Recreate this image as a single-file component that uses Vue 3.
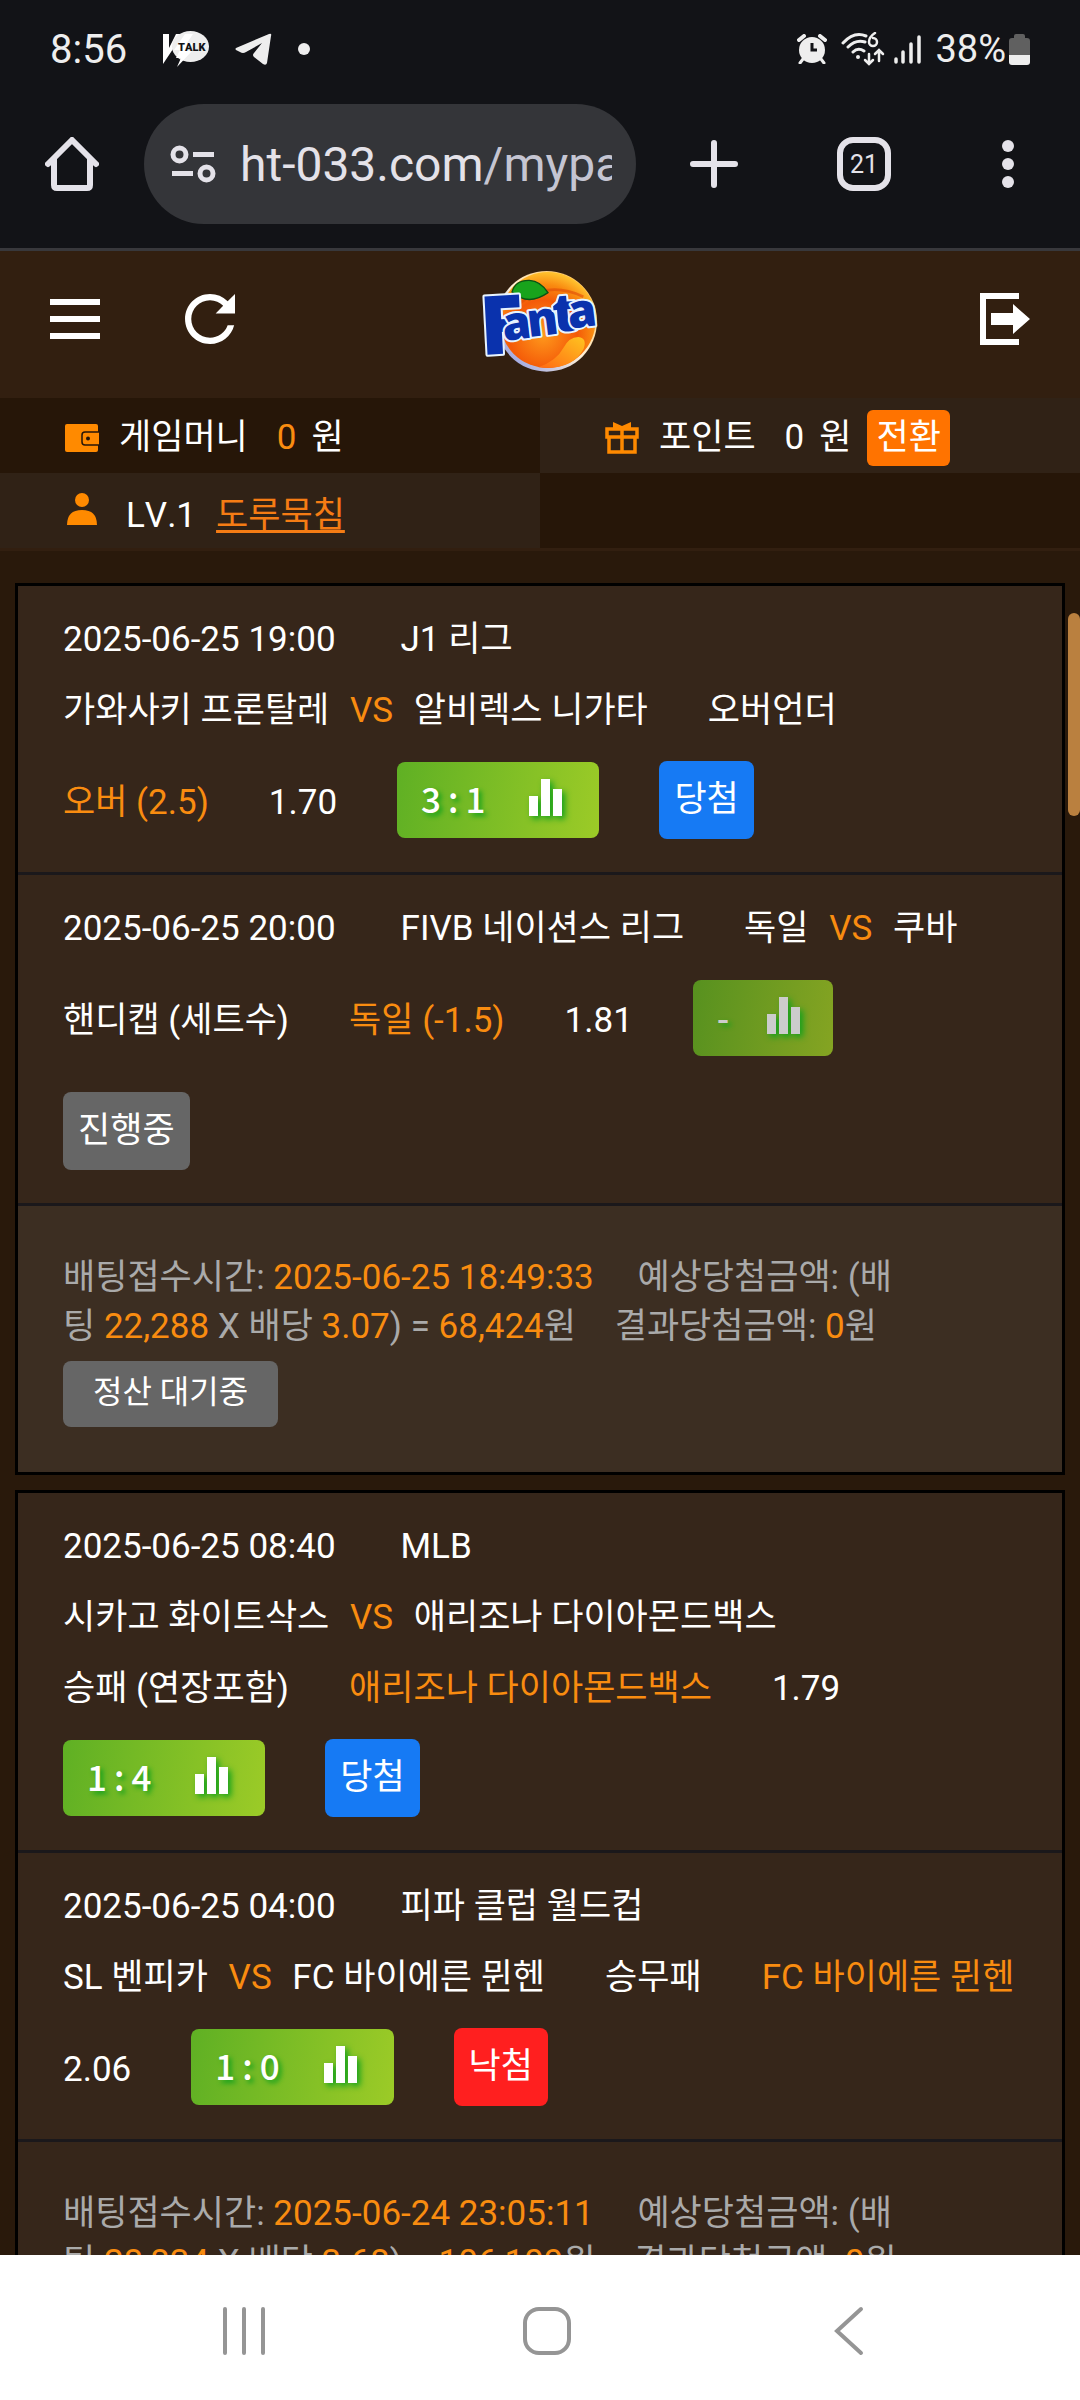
<template>
  <div class="phone">
    <header class="status-bar">
      <span class="clock">8:56</span>
      <svg class="ico-talk" viewBox="0 0 46 36">
        <path d="M0 3h6v14l7-14h8L10 18 0 33z" fill="#fff" />
        <ellipse cx="27.500" cy="15.500" rx="18.500" ry="15.500" fill="#eee" />
        <path d="M22 3h8l-6 9h6l-5 8h4L14 36l4-9h-5l4-8h-6z" fill="#fff" />
        <text x="15" y="20">TALK</text>
      </svg>
      <svg class="ico-telegram" viewBox="0 0 37 32">
        <path d="M1 15 34 1q3-1 2 2l-4 27q-1 3-4 1l-9-7q-2-2 0-4l8-10L11 19q-3 2-6 0l-4-2q-1-1 0-2z" fill="#eee" />
      </svg>
      <i class="more-dot"></i>
      <div class="status-right">
        <svg class="ico-alarm" viewBox="0 0 30 30">
          <circle cx="15" cy="16" r="13" fill="#eee" />
          <path d="M2 6l5-4M28 6l-5-4" stroke="#eee" stroke-width="4" stroke-linecap="round" />
          <path d="M6 25l-3 4M24 25l3 4" stroke="#eee" stroke-width="3" stroke-linecap="round" />
          <path d="M15 9v7h5" stroke="#121317" stroke-width="3" fill="none" />
        </svg>
        <svg class="ico-wifi" viewBox="0 0 44 34">
          <g fill="none" stroke="#eee" stroke-width="3" stroke-linecap="round">
            <path d="M2 11Q13-1 25 4M7 15q8-8 17-5M12 20q5-5 11-1" />
            <path d="M28 22v9M24 28l4 4 4-4M38 29v-9M34 22l4-4 4 4" stroke-width="2.500" />
            <path d="M34 1q-6 4-6 9a4 4 0 1 0 4-4" stroke-width="2.500" />
          </g>
          <circle cx="17" cy="25" r="2" fill="#eee" />
        </svg>
        <svg class="ico-signal" viewBox="0 0 28 30">
          <path d="M2 25v3M9 18v10M17 10v18M25 3v25" stroke="#eee" stroke-width="3.500" stroke-linecap="round" />
        </svg>
        <span class="percent">38%</span>
        <svg class="ico-battery" viewBox="0 0 21 31">
          <path d="M5 2q0-2 2-2h7q2 0 2 2v2h2q3 0 3 3v14H0V7q0-3 3-3h2z" fill="#606060" />
          <path d="M0 21h21v7q0 3-3 3H3q-3 0-3-3z" fill="#eee" />
        </svg>
      </div>
    </header>

    <div class="toolbar">
      <button class="tool home" aria-label="홈">
        <svg viewBox="0 0 54 54">
          <path d="M3 27 27 3l24 24M9 22v26q0 3 3 3h30q3 0 3-3V22" fill="none" stroke="#e4e2e9" stroke-width="6" stroke-linecap="round" stroke-linejoin="round" />
        </svg>
      </button>
      <a class="url" href="#">
        <svg class="ico-tune" viewBox="0 0 46 38">
          <g fill="none" stroke="#e4e2e9" stroke-width="5">
            <circle cx="9.500" cy="9.500" r="6.500" />
            <circle cx="36.500" cy="28.500" r="6.500" />
            <path d="M23 9.500h21M2 28.500h21" />
          </g>
        </svg>
        <span class="address">ht-033.com<span class="path">/mypa</span></span>
      </a>
      <button class="tool plus" aria-label="새 탭">
        <svg viewBox="0 0 54 54">
          <path d="M27 6v42M6 27h42" stroke="#e4e2e9" stroke-width="6" stroke-linecap="round" />
        </svg>
      </button>
      <button class="tool tabs">21</button>
      <button class="tool dots" aria-label="메뉴">
        <svg viewBox="0 0 54 54">
          <g fill="#e4e2e9">
            <circle cx="27" cy="9" r="6" />
            <circle cx="27" cy="27" r="6" />
            <circle cx="27" cy="45" r="6" />
          </g>
        </svg>
      </button>
    </div>

    <main class="page">
      <div class="top">
        <div class="top-left">
          <button class="icon-btn" aria-label="메뉴 열기">
            <svg viewBox="0 0 50 52">
              <path d="M0 9h50M0 26h50M0 43h50" stroke="#fff" stroke-width="6" />
            </svg>
          </button>
          <button class="icon-btn" aria-label="새로고침">
            <svg viewBox="4 4 16 16">
              <path d="M17.650 6.350A7.958 7.958 0 0 0 12 4c-4.420 0-7.990 3.580-7.990 8s3.570 8 7.990 8c3.730 0 6.840-2.550 7.730-6h-2.080A5.990 5.990 0 0 1 12 18c-3.310 0-6-2.690-6-6s2.690-6 6-6c1.660 0 3.140.690 4.220 1.780L13.800 10.200H20V4z" fill="#fff" />
            </svg>
          </button>
        </div>
        <a class="logo" href="#" aria-label="Fanta">
          <svg viewBox="0 0 420 375">
            <defs>
              <radialGradient id="orange" cx="45%" cy="65%" r="65%">
                <stop offset="0" stop-color="#ff9a1c" />
                <stop offset="0.550" stop-color="#f45a08" />
                <stop offset="0.800" stop-color="#f98a10" />
                <stop offset="1" stop-color="#ffc22e" />
              </radialGradient>
              <linearGradient id="rim" x1="0" y1="1" x2="1" y2="0">
                <stop offset="0" stop-color="#7f8fe6" />
                <stop offset="0.500" stop-color="#fff1d8" />
                <stop offset="1" stop-color="#ffb53a" />
              </linearGradient>
              <linearGradient id="slice" x1="0" y1="1" x2="1" y2="0">
                <stop offset="0" stop-color="#ff6a12" />
                <stop offset="1" stop-color="#ffc420" />
              </linearGradient>
            </defs>
            <circle cx="230" cy="184" r="151" fill="url(#rim)" />
            <circle cx="233" cy="180" r="144" fill="url(#orange)" />
            <path d="M150 130q80-70 190-20" fill="none" stroke="#e04a06" stroke-width="8" opacity="0.600" />
            <path d="M205 322q55-20 75-58 18-34 46-33 26 4 15 35-34 66-136 56z" fill="url(#slice)" />
            <path d="M126 96q10-36 52-35 34 2 56 37-60 42-108-2z" fill="#18a31c" stroke="#0b5213" stroke-width="4" />
            <g class="logo-text">
              <text class="big" x="34" y="284" transform="rotate(-3 60 284)">F</text>
              <text x="102" y="243" transform="rotate(-7 102 243)">a</text>
              <text x="176" y="232" transform="rotate(-7 176 232)">n</text>
              <text class="tall" x="252" y="217" transform="rotate(-5 252 217)">t</text>
              <text x="298" y="206" transform="rotate(-7 298 206)">a</text>
            </g>
          </svg>
        </a>
        <button class="icon-btn logout" aria-label="로그아웃">
          <svg viewBox="0 0 50 52">
            <path d="M39 3H3v46h36" fill="none" stroke="#fff" stroke-width="6" />
            <path d="M11 20h22v-9l17 15-17 15v-9H11z" fill="#fff" />
          </svg>
        </button>
      </div>

      <div class="info">
        <div class="cell dark">
          <svg class="cell-ico" viewBox="0 0 34 32">
            <rect y="2" width="33" height="28" rx="2" fill="#ff8a00" />
            <rect x="17" y="10" width="20" height="13" rx="3" fill="#ff8a00" stroke="#261608" stroke-width="1.500" />
            <circle cx="23" cy="16.500" r="2" fill="#261608" />
          </svg>
          <span class="label">게임머니</span>
          <span class="amount orange">0</span>
          <span>원</span>
        </div>
        <div class="cell">
          <svg class="cell-ico" viewBox="0 0 34 32">
            <path d="M8 0l9 4 9-4v6H8z" fill="#ff8a00" />
            <path d="M2 7h30v8H2zM4 15h26v15H4zM17 6v24" fill="none" stroke="#ff8a00" stroke-width="3.500" />
          </svg>
          <span class="label">포인트</span>
          <span class="amount">0</span>
          <span>원</span>
          <button class="convert">전환</button>
        </div>
        <div class="cell member">
          <svg class="cell-ico user" viewBox="0 0 34 32">
            <circle cx="17" cy="7" r="7" fill="#ff8a00" />
            <path d="M2 32q0-15 15-15t15 15z" fill="#ff8a00" />
          </svg>
          <span class="level">LV.1</span>
          <a class="nick" href="#">도루묵침</a>
        </div>
        <div class="cell dark"></div>
      </div>

      <div class="slips">
        <section v-for="slip in slips" :key="slip.time" class="slip">
          <div v-for="game in slip.games" :key="game.date" class="game">
            <span class="item when">{{ game.date }}</span>
            <span class="item">{{ game.league }}</span>
            <span class="item">{{ game.home }} <span class="vs">VS</span> {{ game.away }}</span>
            <span class="item">{{ game.type }}</span>
            <span class="item orange">{{ game.pick }}</span>
            <span class="item">{{ game.rate }}</span>
            <button class="score" :class="{ off: !game.score }" :disabled="!game.score">
              <span class="nums">
                <template v-if="game.score">
                  <b>{{ game.score[0] }}</b><b>:</b><b>{{ game.score[1] }}</b>
                </template>
                <b v-else>-</b>
              </span>
              <svg class="bars" viewBox="0 0 33 37">
                <path d="M0 17h9v20H0zM12 0h9v37h-9zM24 10h9v27h-9z" fill="currentColor" />
              </svg>
            </button>
            <span class="result" :class="game.state">{{ game.result }}</span>
          </div>
          <div class="summary" :class="{ waiting: slip.waiting }">
            <p>배팅접수시간: <em class="when">{{ slip.time }}</em><span class="sep"></span> 예상당첨금액: (배팅 <em>{{ slip.bet }}</em> X 배당 <em>{{ slip.odds }}</em>) = <em>{{ slip.expect }}</em>원<span class="sep"></span> 결과당첨금액: <em>0</em>원</p>
            <span v-if="slip.waiting" class="settle">정산 대기중</span>
          </div>
        </section>
      </div>
      <i class="thumb"></i>
    </main>

    <nav class="nav-bar">
      <button aria-label="최근 앱">
        <svg viewBox="0 0 50 50">
          <path d="M6 3v44M25 3v44M44 3v44" stroke="#959595" stroke-width="4" stroke-linecap="round" />
        </svg>
      </button>
      <button aria-label="홈 화면">
        <svg viewBox="0 0 50 50">
          <rect x="3" y="3" width="44" height="44" rx="14" fill="none" stroke="#959595" stroke-width="4" />
        </svg>
      </button>
      <button aria-label="뒤로">
        <svg viewBox="0 0 50 50">
          <path d="M37 3 13 25l24 22" fill="none" stroke="#959595" stroke-width="4" stroke-linecap="round" />
        </svg>
      </button>
    </nav>
  </div>
</template>

<script setup>
import { ref } from 'vue';

const slips = ref([
  {
    time: '2025-06-25 18:49:33',
    bet: '22,288',
    odds: '3.07',
    expect: '68,424',
    waiting: true,
    games: [
      {
        date: '2025-06-25 19:00',
        league: 'J1 리그',
        home: '가와사키 프론탈레',
        away: '알비렉스 니가타',
        type: '오버언더',
        pick: '오버 (2.5)',
        rate: '1.70',
        score: [3, 1],
        result: '당첨',
        state: 'win'
      },
      {
        date: '2025-06-25 20:00',
        league: 'FIVB 네이션스 리그',
        home: '독일',
        away: '쿠바',
        type: '핸디캡 (세트수)',
        pick: '독일 (-1.5)',
        rate: '1.81',
        score: null,
        result: '진행중',
        state: 'live'
      }
    ]
  },
  {
    time: '2025-06-24 23:05:11',
    bet: '28,834',
    odds: '3.68',
    expect: '106,109',
    waiting: false,
    games: [
      {
        date: '2025-06-25 08:40',
        league: 'MLB',
        home: '시카고 화이트삭스',
        away: '애리조나 다이아몬드백스',
        type: '승패 (연장포함)',
        pick: '애리조나 다이아몬드백스',
        rate: '1.79',
        score: [1, 4],
        result: '당첨',
        state: 'win'
      },
      {
        date: '2025-06-25 04:00',
        league: '피파 클럽 월드컵',
        home: 'SL 벤피카',
        away: 'FC 바이에른 뮌헨',
        type: '승무패',
        pick: 'FC 바이에른 뮌헨',
        rate: '2.06',
        score: [1, 0],
        result: '낙첨',
        state: 'lose'
      }
    ]
  }
]);
</script>

<style>
body {
  margin: 0;
  background: #29190b;
}
</style>

<style scoped>
.phone {
  display: flex;
  flex-direction: column;
  height: 100vh;
  font-family: Roboto, 'Noto Sans CJK KR', sans-serif;
  font-size: 35px;
  font-kerning: none;
  color: #fff;
}

button {
  padding: 0;
  border: 0;
  background: none;
  color: inherit;
  font: inherit;
  font-kerning: none;
}

svg {
  display: block;
}

.status-bar {
  display: flex;
  align-items: center;
  height: 98px;
  padding: 0 50px;
  background: #121317;
  color: #eee;
  font-size: 40px;
}

.ico-talk {
  width: 46px;
  height: 36px;
  margin-left: 36px;
}

.ico-talk text {
  font-size: 11px;
  font-weight: 900;
  fill: #121317;
}

.ico-telegram {
  width: 37px;
  height: 32px;
  margin-left: 26px;
}

.more-dot {
  width: 12px;
  height: 12px;
  margin-left: 26px;
  border-radius: 50%;
  background: #eee;
}

.status-right {
  display: flex;
  align-items: center;
  margin-left: auto;
}

.ico-alarm {
  width: 30px;
  height: 30px;
}

.ico-wifi {
  width: 44px;
  height: 34px;
  margin-left: 14px;
}

.ico-signal {
  width: 28px;
  height: 30px;
  margin-left: 9px;
}

.percent {
  margin: 0 3px 0 13px;
  font-size: 38px;
}

.ico-battery {
  width: 21px;
  height: 31px;
}

.toolbar {
  display: flex;
  align-items: center;
  padding: 6px 45px 24px;
  border-bottom: 3px solid #38383c;
  background: #121317;
}

.tool {
  flex: none;
  width: 54px;
  height: 54px;
  color: #e4e2e9;
}

.url {
  display: flex;
  flex: 1;
  align-items: center;
  min-width: 0;
  height: 120px;
  margin-left: 45px;
  padding: 0 24px 0 26px;
  box-sizing: border-box;
  border-radius: 60px;
  background: #343539;
  color: #e4e2e9;
  text-decoration: none;
}

.ico-tune {
  flex: none;
  width: 46px;
  height: 38px;
}

.address {
  flex: 1;
  margin-left: 24px;
  overflow: hidden;
  font-size: 48px;
  white-space: nowrap;
}

.path {
  color: #c5c5d2;
}

.plus {
  margin-left: 51px;
}

.tabs {
  margin-left: 96px;
  border: 6px solid #e4e2e9;
  border-radius: 16px;
  font-size: 25px;
}

.dots {
  margin-left: 90px;
}

.page {
  position: relative;
  flex: 1;
  min-height: 0;
  overflow: hidden;
  background: #29190b;
}

.top {
  display: grid;
  grid-template-columns: 1fr auto 1fr;
  align-items: center;
  height: 147px;
  padding: 0 50px 12px;
  box-sizing: border-box;
  background: #321f10;
}

.top-left {
  display: flex;
  gap: 85px;
}

.icon-btn svg {
  width: 50px;
  height: 52px;
}

.logo {
  padding-top: 8px;
}

.logo svg {
  width: 140px;
  height: 125px;
}

.logo-text {
  font-family: 'Open Sans', sans-serif;
  font-size: 140px;
  font-weight: 800;
  fill: #0a32ad;
  stroke: #e8f4ff;
  stroke-width: 12px;
  stroke-linejoin: round;
  paint-order: stroke;
}

.big {
  font-size: 245px;
}

.tall {
  font-size: 160px;
}

.logout {
  justify-self: end;
}

.info {
  display: grid;
  grid-template-columns: 1fr 1fr;
  grid-auto-rows: 75px;
  border-bottom: 3px solid #321f10;
}

.cell {
  display: flex;
  align-items: center;
  padding: 4px 65px 0;
  background: #302216;
  line-height: 52px;
}

.member {
  padding-top: 10px;
}

.dark {
  background: #261608;
}

.cell-ico {
  width: 34px;
  height: 32px;
  margin-right: 20px;
}

.user {
  margin-bottom: 14px;
}

.label {
  margin-right: 29px;
}

.amount {
  margin-right: 15px;
}

.orange,
.vs,
.summary em {
  color: #f98c10;
}

.convert {
  height: 56px;
  margin-left: 16px;
  padding: 0 9px;
  border-radius: 6px;
  background: #ff7300;
}

.level {
  margin: 0 20px 0 7px;
}

.nick {
  color: #f57c14;
  text-underline-offset: 3px;
  text-decoration-thickness: 3px;
}

.slips {
  display: flex;
  flex-direction: column;
  gap: 15px;
  padding: 32px 15px;
}

.slip {
  border: 3px solid #000;
  background: #36261a;
}

.game {
  display: flex;
  flex-wrap: wrap;
  align-items: center;
  column-gap: 60px;
  padding: 18px 45px 13px;
  border-bottom: 3px solid #1b181b;
}

.item {
  line-height: 71px;
}

.when {
  margin-right: 5px;
}

.vs {
  margin: 0 12px;
}

.score {
  display: flex;
  align-items: center;
  gap: 44px;
  height: 76px;
  margin: 16px 0 21px;
  padding: 0 37px 5px 24px;
  border-radius: 8px;
  background: linear-gradient(100deg, #5fb024, #9ccb27);
  font-family: 'Noto Sans CJK KR', sans-serif;
  text-shadow: 3px 3px 5px #12a01c;
}

.nums {
  display: flex;
  gap: 7px;
}

.nums b {
  font-weight: 500;
}

.off {
  gap: 38px;
  padding-right: 33px;
  background: linear-gradient(100deg, #57911f, #85a422);
  color: #ccc;
}

.bars {
  width: 33px;
  height: 37px;
  filter: drop-shadow(3px 3px 3px #12a01c);
}

.result {
  height: 78px;
  margin: 15px 0 20px;
  padding: 0 15px;
  border-radius: 8px;
  line-height: 78px;
}

.win {
  background: #167af4;
}

.lose {
  background: #ff1f1f;
}

.live {
  background: #666;
}

.summary {
  padding: 47px 45px 45px;
  color: #aaa;
}

.waiting {
  background: #3c2e22;
}

.summary p {
  margin: 0 11% 10px 0;
  line-height: 49px;
  word-break: break-all;
}

.summary em {
  font-style: normal;
}

.sep {
  margin-left: 30px;
}

.settle {
  display: inline-block;
  height: 66px;
  padding: 0 30px;
  border-radius: 8px;
  background: #666;
  color: #fff;
  font-size: 32px;
  line-height: 62px;
}

.thumb {
  position: absolute;
  top: 362px;
  right: 0;
  width: 12px;
  height: 203px;
  border-radius: 6px;
  background: #ba803f;
}

.nav-bar {
  display: flex;
  justify-content: space-between;
  align-items: center;
  height: 145px;
  padding: 6px 206px 0 219px;
  box-sizing: border-box;
  background: #fff;
}

.nav-bar svg {
  width: 50px;
  height: 50px;
}
</style>
